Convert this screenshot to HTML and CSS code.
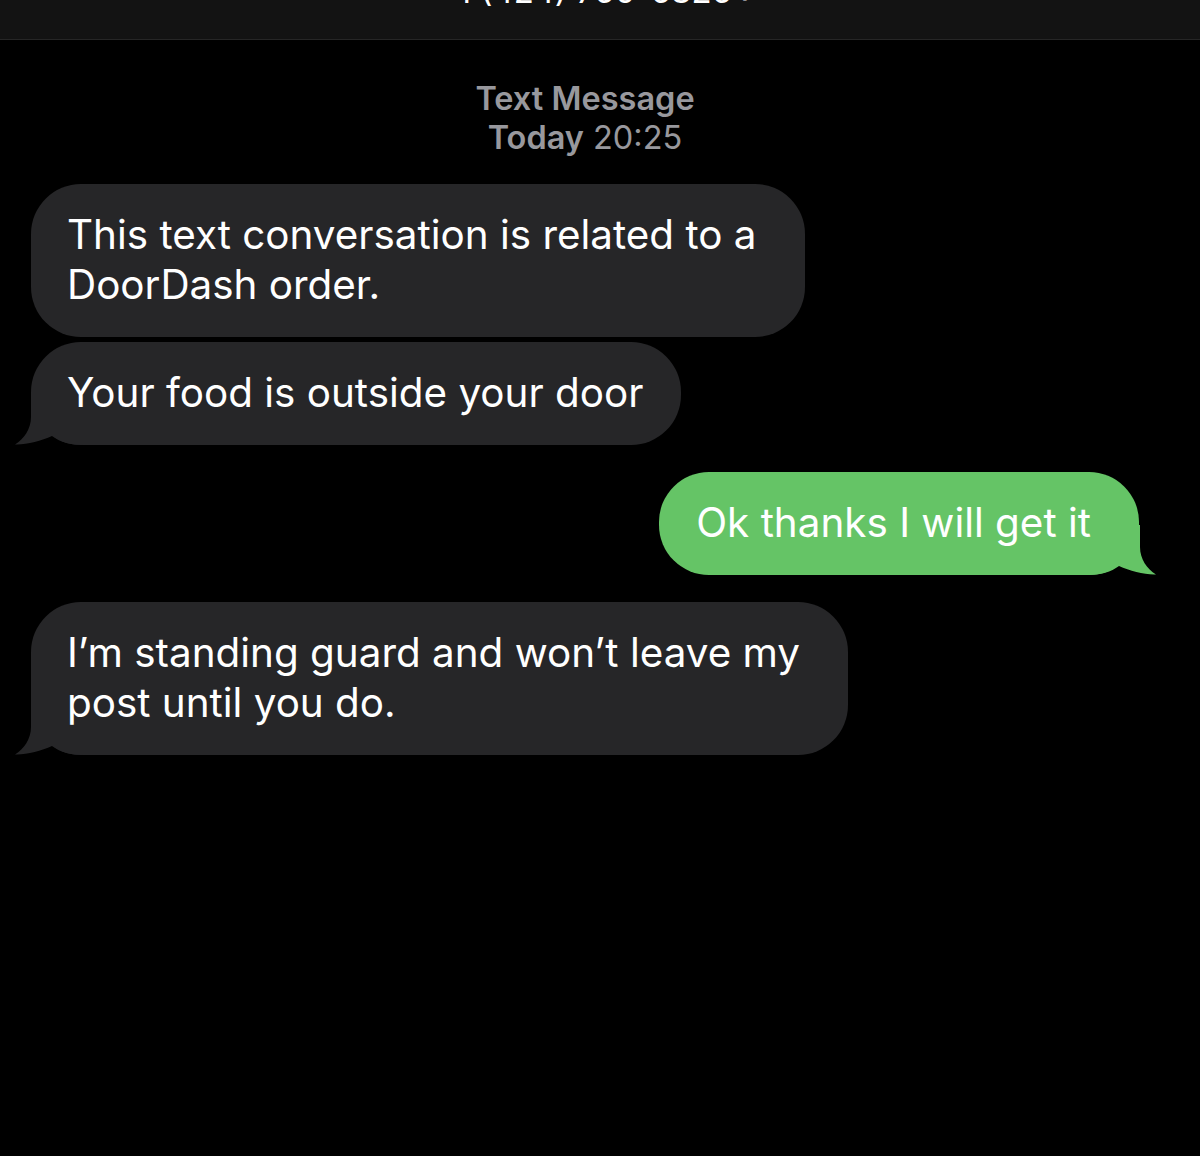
FILE: index.html
```html
<!DOCTYPE html>
<html lang="en">
<head>
    <meta charset="UTF-8">
    <meta name="viewport" content="width=device-width, initial-scale=1.0">
    <title>Messages</title>
    <link rel="stylesheet" href="styles.css">
</head>
<body>
    <div class="top-bar">
        <div class="contact-name">+1 (424) 760-6826 <span class="chevron">&rsaquo;</span></div>
    </div>

    <div class="thread">
        <div class="thread-stamp">
            <div class="stamp-kind">Text Message</div>
            <div><strong>Today</strong> 20:25</div>
        </div>

        <div class="row first">
            <div class="bubble received multi"><span class="bubble-text">This text conversation is related to a<br>DoorDash order.</span></div>
        </div>
        <div class="row tight">
            <div class="bubble received">
                <svg class="tail-shape" width="70" height="50" viewBox="0 0 70 50"><path d="M17,0 L17,22 C17,34 10,44 1,49.5 C12,50 27,46 38,41 C46,47 56,50 70,50 L70,0 Z"/></svg>
                <span class="bubble-text">Your food is outside your door</span>
            </div>
        </div>

        <div class="row sent-row">
            <div class="bubble sent">
                <svg class="tail-shape" width="70" height="50" viewBox="0 0 70 50"><path d="M53,0 L53,22 C53,34 60,44 69,49.5 C58,50 43,46 32,41 C24,47 14,50 0,50 L0,0 Z"/></svg>
                <span class="bubble-text">Ok thanks I will get it</span>
            </div>
        </div>

        <div class="row">
            <div class="bubble received multi">
                <svg class="tail-shape" width="70" height="50" viewBox="0 0 70 50"><path d="M17,0 L17,22 C17,34 10,44 1,49.5 C12,50 27,46 38,41 C46,47 56,50 70,50 L70,0 Z"/></svg>
                <span class="bubble-text">I&rsquo;m standing guard and won&rsquo;t leave my<br>post until you do.</span>
            </div>
        </div>
    </div>
</body>
</html>
```

FILE: styles.css
```css
body {
    margin: 0;
    background-color: #000;
    color: #fff;
    font-family: Inter, "Noto Sans", sans-serif;
}

.top-bar {
    height: 39px;
    overflow: hidden;
    background-color: #131313;
    border-bottom: 1px solid #262626;
    display: flex;
    justify-content: center;
    align-items: flex-start;
}

.contact-name {
    margin-top: -29px;
    margin-right: 10px;
    font-size: 33px;
    line-height: 40px;
    color: #fff;
    white-space: nowrap;
}

.contact-name .chevron {
    color: #8e8e93;
}

.thread {
    padding: 0 61px 0 31px;
    display: flex;
    flex-direction: column;
}

.thread-stamp {
    text-align: center;
    color: #98989d;
    font-size: 32.5px;
    line-height: 39px;
    padding: 39px 0 27px;
}

.stamp-kind,
.thread-stamp strong {
    font-weight: 600;
}

.row {
    display: flex;
    margin-top: 27px;
}

.row.first {
    margin-top: 0;
}

.row.tight {
    margin-top: 5px;
}

.sent-row {
    justify-content: flex-end;
    margin-top: 27px;
}

.bubble {
    position: relative;
    font-size: 40.4px;
    line-height: 50px;
    padding: 26px 38px 27px 36px;
    border-radius: 50px;
    white-space: nowrap;
}

.bubble.multi {
    padding-right: 48px;
}

.bubble-text {
    position: relative;
}

.received {
    background-color: #262628;
}

.sent {
    background-color: #65c466;
    padding: 26px 48px 27px 37px;
}

.tail-shape {
    position: absolute;
    bottom: 0;
}

.received .tail-shape {
    left: -17px;
    fill: #262628;
}

.sent .tail-shape {
    right: -18px;
    fill: #65c466;
}
```
